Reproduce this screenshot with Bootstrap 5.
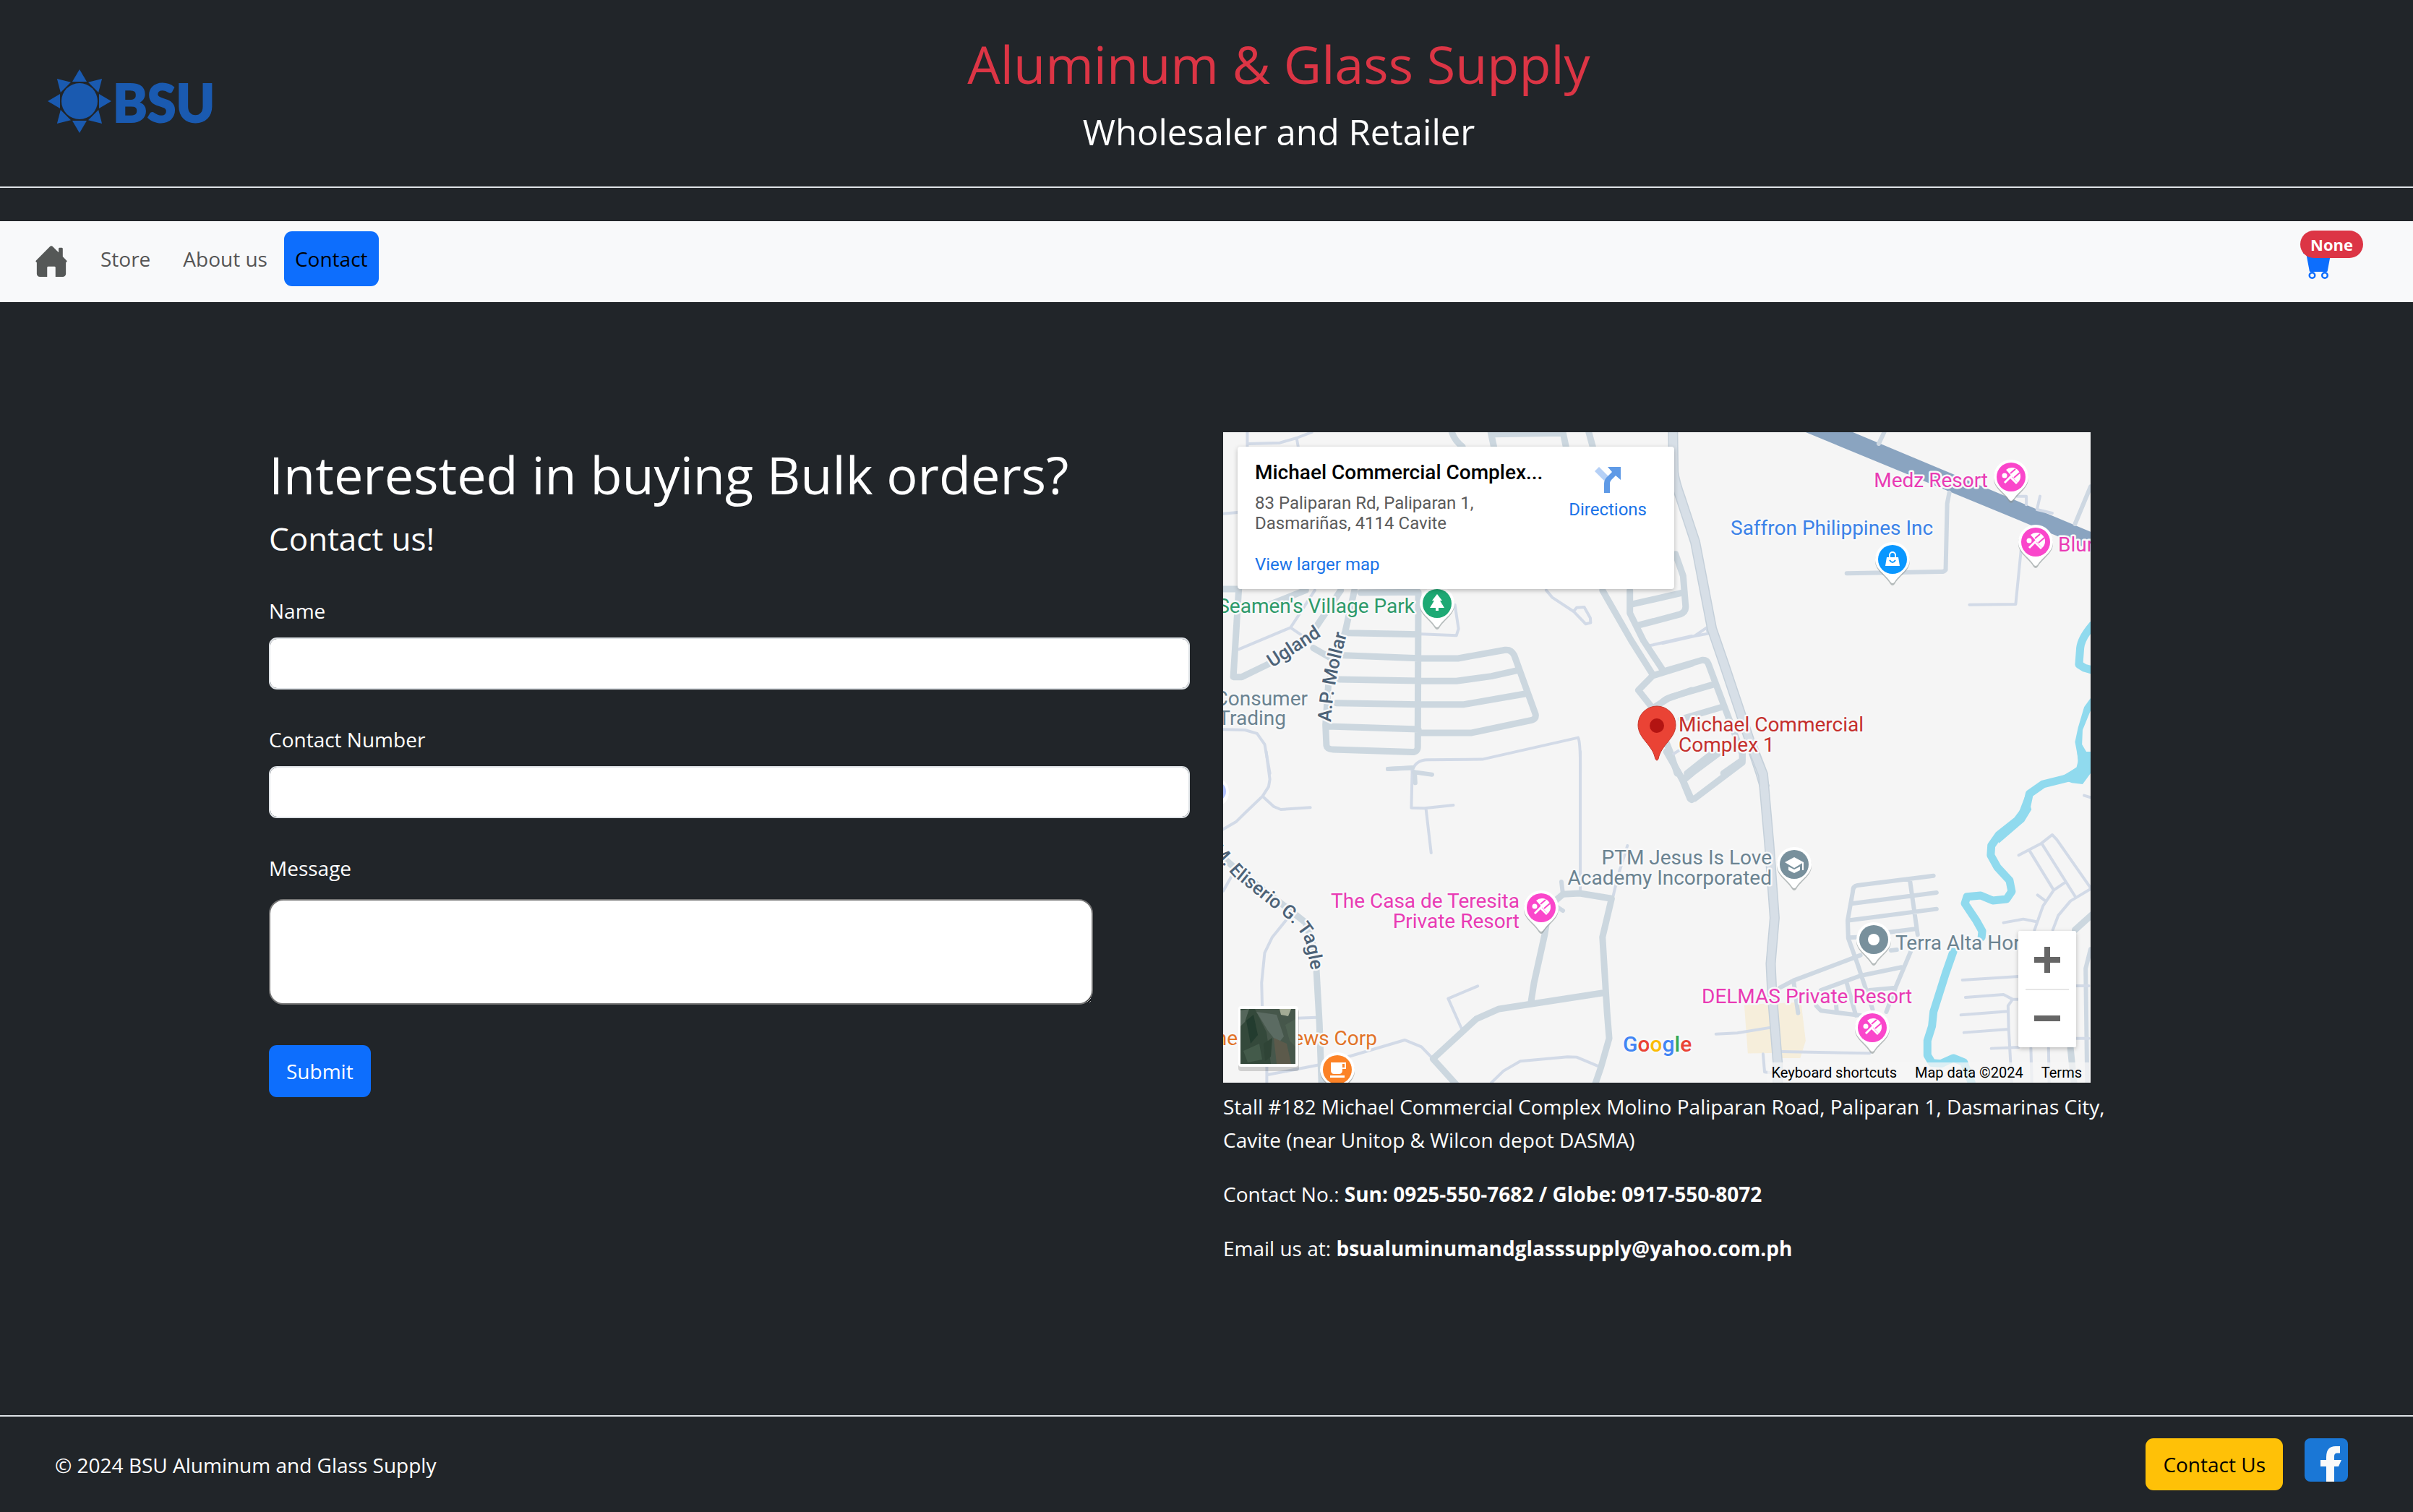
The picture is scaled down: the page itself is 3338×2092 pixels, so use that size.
<!DOCTYPE html>
<html lang="en" data-bs-theme="light">
<head>
<meta charset="utf-8">
<meta name="viewport" content="width=device-width, initial-scale=1">
<title>Contact - BSU Aluminum and Glass Supply</title>
<link href="https://cdn.jsdelivr.net/npm/bootstrap@5.3.0/dist/css/bootstrap.min.css" rel="stylesheet">
<style>
  body { font-family: "Open Sans", "Noto Sans", sans-serif; font-size: 28px; line-height: 46px; background: #212529; color: #fff; }
  .site-head { padding: 42px 100px 44px 60px; border-bottom: 2px solid #dee2e6; margin-bottom: 46px; }
  .site-logo { width: 240px; height: 100px; margin-top: 24px; }
  .site-title { font-size: 72px; line-height: 92px; margin-bottom: 16px; font-weight: 400; }
  .site-sub { font-size: 49px; line-height: 64px; margin: 0; font-weight: 400; }
  .site-nav { padding: 14px 48px 22px; background: #f8f9fa; }
  .site-nav .nav-link { color: #555; padding: 15px; line-height: 46px; border-radius: 11px; }
  .site-nav .home-link { padding: 17px 0 0; margin-right: 30px; line-height: 0; }
  .site-nav .nav { column-gap: 0; }
  .site-nav .nav-gap { margin-left: 15px; margin-right: 8px; }
  .site-nav .nav-link.active { background: #0d6efd; color: #000; }
  .cart-link { width: 40px; height: 40px; margin: 10px 64px 0 0; line-height: 0; }
  .cart-count { left: -4px; top: -11px; font-size: 22px; line-height: 22px; padding: 8px 14px; }
  .site-main { width: 2640px; max-width: 100%; padding: 180px 0 208px; margin: 0 auto; }
  .site-main > .row { --bs-gutter-x: 46px; margin: 0; }
  .bulk-title { font-size: 72px; line-height: 92px; margin: 12px 0 16px; font-weight: 400; }
  .bulk-sub { font-size: 44px; line-height: 54px; margin-bottom: 50px; font-weight: 400; }
  .field { margin-bottom: 46px; }
  .form-label { margin-bottom: 14px; display: block; }
  .form-control { height: 72px; border: 2px solid #dee2e6; border-radius: 11px; font-size: 28px; }
  .msg-box { display: block; width: 1140px; max-width: 100%; height: 146px; border: 2px solid #767676; border-radius: 20px; margin: 20px 0 56px; background: #fff; }
  .btn { font-size: 28px; line-height: 46px; padding: 11px 22px; border-width: 2px; border-radius: 11px; }
  .map-frame { max-width: 1200px; aspect-ratio: 4 / 3; background: #f5f5f5; margin-bottom: 10px; font-family: Roboto, sans-serif; }
  .map-art { display: block; width: 100%; height: 100%; }
  .map-frame a { text-decoration: none; color: #1a73e8; }
  .place-card { left: 20px; top: 20px; width: 604px; height: 197px; padding: 20px 38px 0 24px; background: #fff; border-radius: 4px; box-shadow: 0 2px 6px rgba(0,0,0,.25); font-size: 24px; line-height: 28px; color: #5b5b5b; }
  .place-name { font-size: 28px; line-height: 32px; font-weight: 500; color: #000; margin-bottom: 12px; }
  .place-more { margin-top: 29px; }
  .dir-link { line-height: 28px; padding-top: 7px; }
  .dir-link svg { display: block; margin: 0 auto 8px; }
  .zoom-box { right: 20px; top: 690px; width: 80px; height: 161px; background: #fff; border-radius: 2px; box-shadow: 0 2px 6px rgba(0,0,0,.25); }
  .zoom-box button { flex: 1; border: 0; background: none; padding: 0; line-height: 0; }
  .zoom-box hr { margin: 0 10px; opacity: 1; border-top: 2px solid #e6e6e6; }
  .map-terms { right: 0; bottom: 0; height: 28px; padding: 0 12px 0 6px; gap: 25px; font-size: 20px; line-height: 28px; background: rgba(245,245,245,.75); }
  .map-frame .map-terms a { color: #000; }
  .addr p { margin-bottom: 29px; }
  .site-foot { border-top: 2px solid #dee2e6; padding: 30px 90px 30px 76px; }
  .foot-note { margin: 14px 0 0; }
  .fb-link { line-height: 0; margin-left: 30px; }
  .halo { paint-order: stroke; stroke: #f7f8f9; stroke-width: 5px; stroke-linejoin: round; }
  .thin, .road, .lane, .water { fill: none; stroke-linejoin: round; stroke-linecap: round; }
  .thin { stroke: #d2dae7; stroke-width: 4px; }
  .lane { stroke: #ced8e2; stroke-width: 6px; }
  .road { stroke: #ccd7df; stroke-width: 9px; }
  .water { stroke: #90daee; stroke-width: 11px; }
  .map-art path { vector-effect: non-scaling-stroke; }
</style>
</head>
<body class="d-flex flex-column min-vh-100">
<header class="site-head d-flex align-items-center">
  <a href="#" aria-label="BSU home" class="lh-1">
    <svg class="site-logo d-block" viewBox="60 90 240 100" fill="#1a5ab0">
      <circle cx="110" cy="140" r="25"/>
      <g>
        <path id="ray" d="M110 96l10 17h-20z"/>
        <use href="#ray" transform="rotate(45 110 140)"/><use href="#ray" transform="rotate(90 110 140)"/><use href="#ray" transform="rotate(135 110 140)"/><use href="#ray" transform="rotate(180 110 140)"/><use href="#ray" transform="rotate(225 110 140)"/><use href="#ray" transform="rotate(270 110 140)"/><use href="#ray" transform="rotate(315 110 140)"/>
      </g>
      <text x="156" y="169" font-family="Lato" font-weight="900" font-size="72" stroke="#1a5ab0" stroke-width="2">BSU</text>
    </svg>
  </a>
  <div class="flex-grow-1 text-center">
    <h1 class="site-title text-danger">Aluminum &amp; Glass Supply</h1>
    <h2 class="site-sub">Wholesaler and Retailer</h2>
  </div>
</header>

<nav class="site-nav d-flex justify-content-between">
  <ul class="nav align-items-start flex-nowrap">
    <li><a class="nav-link home-link" href="#" aria-label="Home">
      <svg width="46" height="46" viewBox="0 0 16 16" fill="#555857"><path d="M8.707 1.5a1 1 0 0 0-1.414 0L.646 8.146A.5.5 0 0 0 1 9v5.5A1.5 1.5 0 0 0 2.500 16H6v-4.500a.5.5 0 0 1 .5-.5h3a.5.5 0 0 1 .5.5V16h3.500a1.500 1.500 0 0 0 1.500-1.500V9a.5.5 0 0 0 .354-.854L13.500 6.293V2.500a.5.5 0 0 0-.5-.5h-1a.5.5 0 0 0-.5.5v1.793z"/></svg></a></li>
    <li><a class="nav-link" href="#">Store</a></li>
    <li class="nav-gap"><a class="nav-link" href="#">About us</a></li>
    <li><a class="nav-link active" aria-current="page" href="#">Contact</a></li>
  </ul>
  <a class="cart-link position-relative d-block" href="#" aria-label="Cart">
    <svg class="mt-3" width="40" height="40" viewBox="0 0 16 16" fill="#0d6efd"><path d="M0 1.500A.5.5 0 0 1 .5 1H2a.5.5 0 0 1 .485.379L2.890 3H14.500a.5.5 0 0 1 .491.592l-1.500 8A.5.5 0 0 1 13 12H4a.5.5 0 0 1-.491-.408L2.010 3.607 1.610 2H.5a.5.5 0 0 1-.5-.5zM5 12a2 2 0 1 0 0 4 2 2 0 0 0 0-4zm7 0a2 2 0 1 0 0 4 2 2 0 0 0 0-4zm-7 1a1 1 0 1 1 0 2 1 1 0 0 1 0-2zm7 0a1 1 0 1 1 0 2 1 1 0 0 1 0-2z"/></svg>
    <span class="cart-count badge rounded-pill text-bg-danger position-absolute">None</span>
  </a>
</nav>

<main class="site-main flex-grow-1">
  <div class="row">
    <section class="col-6">
      <h2 class="bulk-title">Interested in buying Bulk orders?</h2>
      <h3 class="bulk-sub">Contact us!</h3>
      <form>
        <div class="field"><label class="form-label" for="name">Name</label><input class="form-control" id="name" type="text"></div>
        <div class="field"><label class="form-label" for="phone">Contact Number</label><input class="form-control" id="phone" type="text"></div>
        <label class="d-block" for="msg">Message</label>
        <textarea class="msg-box" id="msg"></textarea>
        <button class="btn btn-primary" type="submit">Submit</button>
      </form>
    </section>
    <section class="col-6">
      <div class="map-frame position-relative overflow-hidden">
        <svg class="map-art" viewBox="0 0 1200 900" font-size="28">
          <defs>
            <g id="drop"><path d="M0-24a24 24 0 0 1 24 24C24 14 10 20 3 32q-3 4-6 0C-10 20-24 14-24 0A24 24 0 0 1 0-24z" fill="#8a9494" opacity=".6" transform="translate(0 2)"/><path d="M0-24a24 24 0 0 1 24 24C24 14 10 20 3 31q-3 4-6 0C-10 20-24 14-24 0A24 24 0 0 1 0-24z" fill="#fff"/></g>
            <g id="resort"><use href="#drop"/><circle r="20" fill="#fa46cb"/><circle cx="-9" cy="-2" r="3.500" fill="#fff"/><path d="M-7-10A11 11 0 0 1 9 8z" fill="#fff"/><path d="M-9 8L3-4M0 1L8 9" stroke="#fff" stroke-width="3"/><path d="M-1-5L6-11M4 1L12-6" stroke="#fa46cb" stroke-width="2"/></g>
            <path id="eliserio" d="M-24 572L14 614L74 662Q106 684 114 706L124 756"/>
            <path id="mollar" d="M149 401Q152 345 174 270"/>
          </defs>
          <!-- north-west sheet -->
          <g transform="translate(-12 -8) scale(.421 .3333)">
            <path class="thin" d="M108 24V84M108 72L215 68L270 48L320 24M270 48L275 84M29 362L76 357M330 680L250 835L80 925M250 835L290 870M680 862L795 868L802 840L790 740M1090 680L1110 710L1180 768L1220 820L1236 815L1235 795L1215 750L1190 752L1180 768M1430 910L1568 870M29 1258L100 1260L140 1275L165 1320L182 1440M650 1430Q660 1385 700 1384L880 1382L1195 1292Q1203 1310 1202 1440"/>
            <path class="road" d="M780 24Q790 60 815 84M908 24L918 84M910 32L1140 28M1145 24L1155 84M1230 24L1243 84M29 675H80L62 1040H90L180 985M180 740L300 680M415 680L330 840M325 920L380 960M460 680L430 850L375 1060L365 1240L368 1325Q370 1340 390 1341L650 1352Q668 1352 668 1330L670 690M480 690L670 688M440 857L670 863M425 950L670 962L800 963L955 928Q975 925 985 950L1055 1195Q1058 1215 1040 1220L845 1272H670M410 1050L670 1056L795 1057L910 1037L995 1013M400 1148L670 1154H820L1020 1110M375 1245L670 1257M1275 680L1370 890L1440 1030M1365 680V775L1410 890L1470 1005M1365 740L1540 690M1395 825L1530 780Q1550 770 1548 745L1540 620L1515 530M1568 985L1440 1035L1393 1095L1440 1170M1568 1095L1490 1130L1440 1170L1500 1360L1520 1440"/>
            <path class="lane" d="M570 1422L650 1418"/>
          </g>
          <!-- north-east sheet -->
          <g transform="translate(608 -8) scale(.421 .3333)">
            <path d="M470 24H625L1406 437V512Z" fill="#8aa4c0"/>
            <path class="thin" d="M1178 510L1160 738L1008 740M1165 290H1195V325M1240 290L1230 345L1280 360M0 900L105 870L145 835L150 860L105 870M35 1360L60 1340"/>
            <path class="lane" d="M728 24L710 72M942 275L935 320L930 595Q925 605 910 603L605 610M1406 250L1355 405"/>
            <path class="road" d="M0 1018L130 970Q145 968 150 985L205 1170L262 1360V1385L200 1440M0 1143Q10 1130 30 1122L170 1070M60 1215L195 1165M160 1360L80 1440"/>
            <path class="water" d="M1412 825Q1375 880 1372 920L1368 988L1385 1002L1412 1012"/>
            <path fill="#90daee" d="M1406 1128L1385 1165L1365 1250L1355 1310L1366 1385L1360 1415L1330 1440H1406V1380L1378 1320L1380 1260L1406 1180Z"/>
            <path d="M34 20L36 190Q40 230 60 300L107 480L162 840L200 980L322 1440L336 1500" fill="none" stroke="#c5d0da" stroke-width="14"/>
            <path d="M34 20L36 190Q40 230 60 300L107 480L162 840L200 980L322 1440L336 1500" fill="none" stroke="#d7dfe7" stroke-width="11"/>
          </g>
          <!-- south-west sheet -->
          <g transform="translate(-12 442) scale(.421 .3333)">
            <path class="thin" d="M170 0L182 115L178 145L158 185L100 255L72 290L29 322M158 185L195 228L218 240L315 232M55 520L29 578M650 70L647 233L690 235L785 222M695 237L712 420M1202 0V585M235 700L190 770L165 835L155 960L157 1060M270 1106L335 1103M172 1374V1300M172 1342L345 1300M430 1270L625 1197L680 1225L718 1275M1310 600L1325 520L1357 390M865 973L768 1025L812 1150M910 1374L950 1325L1005 1285L1160 1267L1190 1268L1265 1308"/>
            <path class="lane" d="M570 72L650 66M655 85L715 95M658 85L660 130M1140 540L1145 592M1145 660L1120 640"/>
            <path class="road" d="M20 430L60 475L240 650L300 710L335 850V905L345 1130L352 1380M718 1275L796 1384M718 1275L860 1110L935 1068L1285 1000M1040 1040L1050 960L1085 760L1100 640L1145 592L1200 588L1305 610L1275 770L1290 1080L1297 1190L1270 1310L1250 1384M1485 0L1540 120L1568 200M1540 120L1568 90"/>
          </g>
          <!-- south-east sheet -->
          <g transform="translate(608 442) scale(.421 .3333)">
            <path fill="#f6eedb" d="M268 1050L455 1040L470 1200L452 1272H390L385 1250L280 1253Z"/>
            <path class="road" d="M15 0L65 118L90 195H105L262 45V0M65 118L180 10M1412 675L1355 740M1340 1230L1352 1380"/>
            <path class="lane" d="M890 515L640 555Q625 558 625 580L608 700L610 775L640 880L690 1070M900 585L625 630M900 653L615 700M835 735L740 750M812 530L838 760M770 822L750 825M610 772L640 770M815 830L765 980L735 1080M785 895L650 930L520 990M650 845L430 950L385 980M765 980L680 990M605 960L635 1095M650 1095L520 1075L505 1055M430 950L445 1085M570 1050L572 1080M1406 820L1390 900L1395 1374"/>
            <path class="thin" d="M175 1172L245 1168L355 1145M390 1245L680 1252M330 1255L335 1330L370 1335M1170 430L1245 380L1280 345L1295 365L1406 565M1205 410L1285 575M1245 380L1355 600M1320 545L1285 575L1250 640L1222 740M1232 595L1258 620M1406 570L1340 620L1300 680L1282 740M1120 710L1185 695L1225 705M985 948L1170 933M995 1020L1120 1008L1150 1028H1170M1150 1028L1135 1055L1137 1150L1147 1374M980 1093L1135 1078M990 1166L1137 1152M1080 1232L1170 1227M1210 1230L1213 1374M1268 1230L1270 1374M1358 972H1400M1358 1190H1400M1385 182L1406 190"/>
            <path d="M292 -30L330 95L350 380L368 690L355 880L360 1010L378 1290V1380" fill="none" stroke="#c5d0da" stroke-width="14"/>
            <path d="M288 -50L300 0L330 95L350 380L368 690L355 880L360 1010L378 1290V1380" fill="none" stroke="#d7dfe7" stroke-width="11"/>
            <path class="water" d="M1390 60L1345 105L1250 135L1205 175L1195 235L1165 285L1105 345L1080 390L1078 430L1100 480L1140 535L1147 580L1130 612L1085 618L1045 597L1000 602L993 630L1030 700L1050 745L1048 770M955 830L930 920L890 1080L885 1140L870 1200V1260L885 1292L915 1295L955 1272L990 1290L1015 1374"/>
            <path fill="#90daee" d="M1362 0H1406V90L1380 135L1345 130L1300 110L1366 62ZM1195 170L1212 240L1188 290L1105 380L1100 345L1165 270Z"/>
          </g>
          <!-- street names -->
          <g class="halo" fill="#4d6277" font-weight="500" font-size="26">
            <text><textPath href="#eliserio" startOffset="10">M. Eliserio G. Tagle</textPath></text>
            <text><textPath href="#mollar">A.P. Mollar</textPath></text>
            <text transform="translate(68 326) rotate(-33)">Ugland</text>
          </g>
          <!-- places -->
          <g class="halo">
            <g fill="#e93bb4"><text x="1058" y="76" text-anchor="end">Medz Resort</text><text x="1155" y="165">Blur</text><text x="410" y="658" text-anchor="end">The Casa de Teresita</text><text x="410" y="686" text-anchor="end">Private Resort</text><text x="662" y="790">DELMAS Private Resort</text></g>
            <text x="702" y="142" fill="#3b82e8">Saffron Philippines Inc</text>
            <text x="265" y="250" text-anchor="end" fill="#2e9a6a">Seamen's Village Park</text>
            <g fill="#c5302d"><text x="630" y="414">Michael Commercial</text><text x="630" y="442">Complex 1</text></g>
            <g fill="#6b8391"><text x="117" y="378" text-anchor="end">Consumer</text><text x="87" y="405" text-anchor="end">Trading</text><text x="759" y="598" text-anchor="end">PTM Jesus Is Love</text><text x="759" y="626" text-anchor="end">Academy Incorporated</text><text x="930" y="716">Terra Alta Hor</text></g>
            <g fill="#e27327"><text x="213" y="848" text-anchor="end">ews Corp</text><text x="20" y="848" text-anchor="end">ne</text></g>
          </g>
          <ellipse cx="-6" cy="498" rx="14" ry="18" fill="#fff"/><ellipse cx="-8" cy="497" rx="12" ry="13" fill="#b5c5ff"/>
          <use href="#resort" x="1090" y="62"/><use href="#resort" x="1124" y="152"/><use href="#resort" x="440" y="658"/><use href="#resort" x="898" y="824"/>
          <g transform="translate(926 176)"><use href="#drop"/><circle r="20" fill="#0a97ff"/><path d="M-8-3H8L10 9H-10z" fill="#fff"/><path d="M-4-2V-6a4 4 0 0 1 8 0v4" fill="none" stroke="#fff" stroke-width="2"/><path d="M-4 1q4 6 8 0" fill="none" stroke="#0a97ff" stroke-width="2"/></g>
          <g transform="translate(296 237)"><use href="#drop"/><circle r="20" fill="#1da974"/><path d="M0-13L7-4H4L10 6H2V10H-2V6H-10L-4-4H-7z" fill="#fff"/></g>
          <g transform="translate(790 598)"><use href="#drop"/><circle r="20" fill="#78909c"/><path d="M0-10L13-3L0 5L-13-3zM-8 3L0 7L8 3V8L0 12L-8 8zM11-3H13V8H11z" fill="#fff"/></g>
          <g transform="translate(900 702)"><use href="#drop"/><circle r="20" fill="#78909c"/><circle r="8" fill="#fff"/></g>
          <g transform="translate(158 882)"><use href="#drop"/><circle r="20" fill="#fc8226"/><path d="M-9-10H12V-1H7V1Q7 6 2 6H-4Q-9 6-9 1zM-10 8H10V11H-10z" fill="#fff"/><path d="M7-8H10V-3H7z" fill="#fc8226"/></g>
          <path d="M600 379a26 26 0 0 1 26 26C626 424 606 432 602 452q-2 4-4 0C594 432 574 424 574 405a26 26 0 0 1 26-26z" fill="#ea4335" stroke="#c5352a"/><circle cx="600" cy="406" r="10" fill="#b31412"/>
          <text x="553" y="857" font-size="30" font-weight="500" class="halo"><tspan fill="#4285f4">G</tspan><tspan fill="#ea4335">o</tspan><tspan fill="#fbbc05">o</tspan><tspan fill="#4285f4">g</tspan><tspan fill="#34a853">l</tspan><tspan fill="#ea4335">e</tspan></text>
          <!-- satellite layer switch -->
          <rect x="21" y="798" width="84" height="86" rx="4" opacity=".15"/>
          <rect x="21" y="794" width="83" height="84" rx="4" fill="#fff"/>
          <rect x="24" y="798" width="76" height="76" fill="#46574b"/>
          <path d="M24 798H44L60 830L66 874H24z" fill="#34493b"/><path d="M46 802L74 806L84 836L76 846L62 828z" fill="#5b6b62"/><path d="M78 798H94L90 808L80 806z" fill="#a3ab95"/><path d="M70 838L88 846L94 874H74z" fill="#5c5a4b"/><path d="M32 814L42 806L48 834L38 846z" fill="#233c2f"/><path d="M28 856L50 846L54 868L34 872z" fill="#435a4a"/><path d="M86 820L100 812V850L92 842z" fill="#4e6152"/><path d="M24 800L36 798L30 816L24 822z" fill="#55665b"/><path d="M56 846L68 838L66 864L58 870z" fill="#2f4436"/>
        </svg>
        <div class="place-card position-absolute d-flex justify-content-between">
          <div>
            <div class="place-name">Michael Commercial Complex...</div>
            <div>83 Paliparan Rd, Paliparan 1,<br>Dasmariñas, 4114 Cavite</div>
            <div class="place-more"><a href="#">View larger map</a></div>
          </div>
          <a class="dir-link text-center" href="#">
            <svg width="38" height="38" viewBox="0 0 38 38"><path d="M1 7L7 1L20 14L14 20z" fill="#b5d0f6"/><path d="M14 37V24Q14 18 19 14L25 8L19 1H37V19L30 13L24 19Q22 21 22 25V37z" fill="#5f9ae6"/></svg>
            Directions</a>
        </div>
        <div class="zoom-box position-absolute d-flex flex-column">
          <button type="button" aria-label="Zoom in"><svg width="36" height="36"><path d="M14 0H22V14H36V22H22V36H14V22H0V14H14z" fill="#666"/></svg></button>
          <hr>
          <button type="button" aria-label="Zoom out"><svg width="36" height="8"><path d="M0 0H36V8H0z" fill="#666"/></svg></button>
        </div>
        <div class="map-terms position-absolute d-flex"><a href="#">Keyboard shortcuts</a><a href="#">Map data ©2024</a><a href="#">Terms</a></div>
      </div>
      <div class="addr">
        <p>Stall #182 Michael Commercial Complex Molino Paliparan Road, Paliparan 1, Dasmarinas City, Cavite (near Unitop &amp; Wilcon depot DASMA)</p>
        <p>Contact No.: <strong>Sun: 0925-550-7682 / Globe: 0917-550-8072</strong></p>
        <p class="mb-0">Email us at: <strong>bsualuminumandglasssupply@yahoo.com.ph</strong></p>
      </div>
    </section>
  </div>
</main>

<footer class="site-foot d-flex justify-content-between">
  <p class="foot-note">© 2024 BSU Aluminum and Glass Supply</p>
  <div class="d-flex align-items-start">
    <button type="button" class="btn btn-warning">Contact Us</button>
    <a class="fb-link" href="#" aria-label="Facebook"><svg width="60" height="60" viewBox="0 0 60 60"><rect width="60" height="60" rx="8" fill="#1a77d6"/><path d="M30 60V39H22V30H30V26Q30 11 43 11H49V20.500H45Q41 20.500 41 25V30H51L47 39H41V60z" fill="#fafafa"/></svg></a>
  </div>
</footer>
<script src="https://cdn.jsdelivr.net/npm/bootstrap@5.3.0/dist/js/bootstrap.bundle.min.js"></script>
</body>
</html>
